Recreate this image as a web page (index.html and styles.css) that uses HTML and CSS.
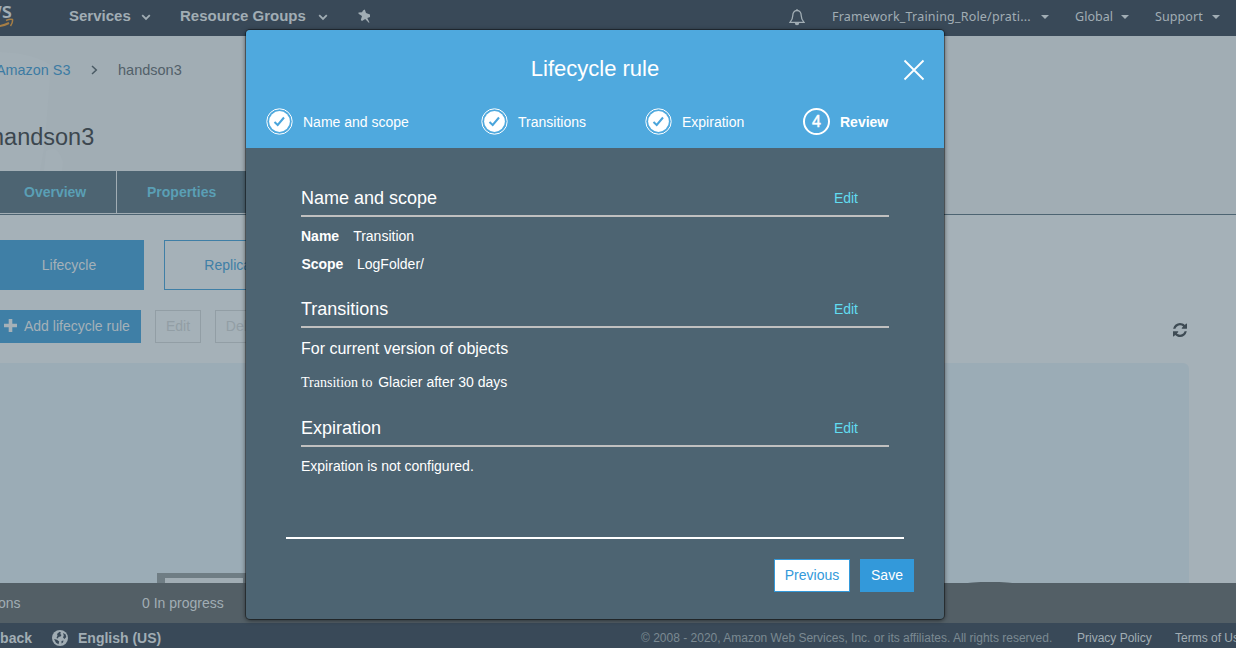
FILE: index.html
```html
<!DOCTYPE html>
<html lang="en">
<head>
<meta charset="utf-8">
<title>Lifecycle rule</title>
<link rel="stylesheet" href="styles.css">
</head>
<body>
<div class="page">
  <nav class="topnav">
    <div class="brand">
      <span class="brand-word">aws</span>
      <svg class="brand-smile" width="34" height="12" viewBox="0 0 34 12"><path d="M0 4.500Q15 12 29 5" fill="none" stroke="#a67e45" stroke-width="2"/><path d="M26 2.500Q30.500 .5 32.500 1.500Q33 4.500 30.500 8" fill="none" stroke="#a67e45" stroke-width="1.500"/></svg>
    </div>
    <span class="menu services">Services</span>
    <svg class="chev c1" width="10" height="7" viewBox="0 0 10 7"><path d="M1.200 1.200L5 5L8.800 1.200" /></svg>
    <span class="menu groups">Resource Groups</span>
    <svg class="chev c2" width="10" height="7" viewBox="0 0 10 7"><path d="M1.200 1.200L5 5L8.800 1.200" /></svg>
    <svg class="pin" width="13" height="15" viewBox="0 0 13 15"><path d="M5 1.500L6.800 .5L8 4L12 5.500L12 8L9.300 9L11.500 13.500L10.800 13.800L7.200 10L4 12L2.800 11L4 7L.5 4.800L.5 3.500L4 3.300Z" fill="#a1adb4"/></svg>
    <svg class="bell" width="16" height="18" viewBox="0 0 16 18"><path d="M8 1V2.500M8 2.500C5 2.500 3.800 5 3.800 7.500C3.800 11 2.700 12.500 1 14.400H15C13.300 12.500 12.200 11 12.200 7.500C12.200 5 11 2.500 8 2.500Z" fill="none" stroke="#a1adb4" stroke-width="1.300"/><path d="M5.800 15H10.200A2.200 2.200 0 0 1 5.800 15Z" fill="#a1adb4"/></svg>
    <span class="account role">Framework_Training_Role/prati...</span><i class="caret"></i>
    <span class="account region">Global</span><i class="caret"></i>
    <span class="account support">Support</span><i class="caret"></i>
  </nav>

  <header class="bucket">
    <svg class="watermark" width="66" height="135" viewBox="0 0 66 135"><path d="M0 16Q32 17 51 29L47 80Q46 105 40 135H0Z" fill="#a3afb6"/><path d="M46 115Q58 108 63 126L62 135H44Z" fill="#a3afb6"/></svg>
    <div class="crumbs">
      <span class="crumb-link">Amazon S3</span>
      <svg class="crumb-arrow" width="7" height="10" viewBox="0 0 7 10"><path d="M1 1L5.300 5L1 9" fill="none" stroke="#4a5a64" stroke-width="1.500"/></svg>
      <span class="crumb">handson3</span>
    </div>
    <h1 class="bucket-name">handson3</h1>
  </header>
  <div class="tabs"><span class="tab overview">Overview</span><span class="tab properties">Properties</span></div>

  <main class="content">
    <div class="switches"><button class="switch active">Lifecycle</button><button class="switch">Replication</button></div>
    <div class="actions">
      <button class="add"><svg width="13" height="13" viewBox="0 0 13 13"><path d="M6.500 0V13M0 6.500H13" stroke="#a5b1b8" stroke-width="3.600"/></svg><span>Add lifecycle rule</span></button>
      <button class="ghost">Edit</button>
      <button class="ghost delete">Delete</button>
      <svg class="refresh" width="14" height="14" viewBox="0 0 1536 1536"><path fill="#3e4b54" d="M1511 928q0 5-1 7-64 268-268 434.500T764 1536q-146 0-282.500-55T238 1324l-129 129q-19 19-45 19t-45-19-19-45V960q0-26 19-45t45-19h448q26 0 45 19t19 45-19 45l-137 137q71 66 161 102t187 36q134 0 250-65t186-179q11-17 53-117 8-23 30-23h192q13 0 22.500 9.500t9.500 22.500zM1536 128v448q0 26-19 45t-45 19h-448q-26 0-45-19t-19-45 19-45l138-138Q969 256 768 256q-134 0-250 65T332 500q-11 17-53 117-8 23-30 23H50q-13 0-22.500-9.500T18 608v-7q65-268 270-434.500T768 0q146 0 284 55.500T1297 212l130-129q19-19 45-19t45 19 19 45z"/></svg>
    </div>
    <div class="rules"><div class="thumb"></div></div>
  </main>

  <div class="operations"><span class="ops-label">Operations</span><span class="progress">0 In progress</span><i class="hump"></i></div>
  <footer class="footer">
    <span class="feedback">Feedback</span>
    <svg class="globe" width="16" height="16" viewBox="0 0 16 16"><circle cx="8" cy="8" r="8" fill="#a1adb4"/><path d="M7.500 1.800L9 2.500L8.200 4L9.500 5L8.500 6.500L6.500 7L6 8.500L4.500 8L5.500 5.500L5 4ZM11 3L13.500 4.200L14.300 7L12.500 9L11 7.500L11.800 5.500ZM2 9L5 9.800L7.200 11.500L6.500 14.200L4 12.800ZM9.500 11L11.500 10.500L11 12.500L9.500 13.500Z" fill="#394958"/></svg>
    <span class="language">English (US)</span>
    <span class="copyright">© 2008 - 2020, Amazon Web Services, Inc. or its affiliates. All rights reserved.</span>
    <span class="legal privacy">Privacy Policy</span>
    <span class="legal terms">Terms of Use</span>
  </footer>
</div>

<section class="modal" role="dialog">
  <div class="modal-head">
    <h2 class="modal-title">Lifecycle rule</h2>
    <svg class="close" width="22" height="22" viewBox="0 0 22 22"><path d="M1.500 1.500L20.500 20.500M20.500 1.500L1.500 20.500" stroke="#fff" stroke-width="1.800"/></svg>
    <div class="steps">
      <div class="step s1"><svg width="27" height="27" viewBox="0 0 27 27"><use href="#done"/></svg><span>Name and scope</span></div>
      <div class="step s2"><svg width="27" height="27" viewBox="0 0 27 27"><use href="#done"/></svg><span>Transitions</span></div>
      <div class="step s3"><svg width="27" height="27" viewBox="0 0 27 27"><use href="#done"/></svg><span>Expiration</span></div>
      <div class="step current"><b class="number">4</b><span>Review</span></div>
    </div>
    <svg class="defs" width="0" height="0"><defs><g id="done"><circle cx="13.500" cy="13.500" r="12.700" fill="none" stroke="#fff"/><circle cx="13.500" cy="13.500" r="10.400" fill="#fff"/><path d="M8.500 14L11.700 17L18 9.500" fill="none" stroke="#4aa5dc" stroke-width="2"/></g></defs></svg>
  </div>
  <div class="modal-body">
    <div class="section-head"><h3>Name and scope</h3><a>Edit</a></div>
    <p class="row name"><b>Name</b><span>Transition</span></p>
    <p class="row scope"><b>Scope</b><span>LogFolder/</span></p>
    <div class="section-head second"><h3>Transitions</h3><a>Edit</a></div>
    <p class="subhead">For current version of objects</p>
    <p class="transition"><span class="serif">Transition to</span><span>Glacier after 30 days</span></p>
    <div class="section-head third"><h3>Expiration</h3><a>Edit</a></div>
    <p class="row">Expiration is not configured.</p>
  </div>
  <div class="modal-foot"><button class="previous">Previous</button><button class="save">Save</button></div>
</section>
</body>
</html>
```

FILE: styles.css
```css
* { box-sizing: border-box; }
body { margin: 0; width: 1236px; height: 648px; overflow: hidden; position: relative; font-family: "Liberation Sans", Arial, sans-serif; font-size: 14px; background: #a5b1b8; }
h1, h2, h3, p { margin: 0; font-weight: 400; }
svg { display: block; flex: none; }
button { font: inherit; border: 0; border-radius: 0; padding: 0; margin: 0; flex: none; }
span { white-space: nowrap; flex: none; }
.page { height: 648px; display: flex; flex-direction: column; overflow: hidden; }

.topnav { height: 36px; flex: none; background: #394958; color: #a1adb4; display: flex; align-items: center; padding-bottom: 4px; }
.brand { width: 69px; height: 32px; flex: none; display: flex; flex-direction: column; margin-left: -20px; margin-right: 20px; }
.brand-word { font: 600 21px/24px "Open Sans", sans-serif; width: 32px; display: flex; justify-content: flex-end; margin-top: -2px; }
.brand-smile { margin-top: -4px; }
.menu { font-size: 15px; font-weight: 700; padding-bottom: 2px; }
.services { width: 72px; }
.groups { width: 138px; }
.chev { fill: none; stroke: #a1adb4; stroke-width: 1.8; margin-top: 2px; }
.c1 { margin-right: 29px; }
.c2 { margin-right: 30px; }
.pin { margin-right: 418px; }
.bell { margin-right: 27px; margin-top: 2px; }
.account { font: 12.5px/18px "Noto Sans", sans-serif; padding-top: 1px; }
.role { width: 209px; letter-spacing: .19px; }
.region { width: 46px; letter-spacing: .05px; }
.support { width: 57px; letter-spacing: .1px; }
.caret { flex: none; border: 3.5px solid transparent; border-top: 4px solid #a1adb4; border-bottom: 0; width: 8px; border-left-width: 4px; border-right-width: 4px; margin-right: 26px; margin-top: 1px; }

.bucket { height: 135px; flex: none; background: #a1adb4; position: relative; color: #4a5a64; }
.watermark { position: absolute; left: 0; top: 0; }
.crumbs { position: relative; display: flex; align-items: center; padding-top: 25px; height: 43px; color: #526069; font-size: 14.5px; }
.crumb-link { color: #3c7ba3; width: 95px; margin-left: -4px; font-size: 14.4px; }
.crumb-arrow { margin-right: 20px; }
.bucket-name { position: relative; font-size: 23.5px; line-height: 28px; color: #3c474f; margin: 44px 0 0 -9px; }
.tabs { height: 44px; flex: none; display: flex; border-bottom: 1px solid #4d6472; padding-bottom: 1px; background: #a1adb4; }
.tab { background: #4d6472; color: #5a9fb5; font-weight: 700; line-height: 42px; }
.overview { width: 117px; padding-left: 24px; border-right: 1px solid #a1adb4; }
.properties { width: 160px; padding-left: 30px; }

.content { height: 368px; flex: none; background: #a5b1b8; padding-top: 25px; display: flex; flex-direction: column; }
.switches { display: flex; height: 50px; flex: none; gap: 20px; }
.switch { width: 150px; height: 50px; border: 1px solid #3f7fa6; background: transparent; color: #3f7fa6; }
.switch.active { background: #3f7fa6; color: #a5b1b8; margin-left: -6px; }
.actions { display: flex; height: 33px; margin-top: 20px; flex: none; }
.add { width: 141px; height: 33px; background: #3f7fa6; color: #a5b1b8; display: flex; align-items: center; gap: 7px; padding: 0 0 2px 4px; margin-right: 14px; }
.ghost { width: 46px; height: 33px; border: 1px solid #929ea5; background: transparent; color: #929ea5; margin-right: 14px; padding-bottom: 2px; }
.delete { width: 62px; }
.refresh { margin: 13px 0 0 882px; }
.rules { width: 1189px; height: 220px; flex: none; margin-top: 20px; background: #9bacb6; border-radius: 0 6px 0 0; display: flex; align-items: flex-end; }
.thumb { width: 94px; height: 10px; margin-left: 157px; border: solid #6f7d84; border-width: 5px 8px 0; background: #a1adb4; }

.operations { height: 40px; flex: none; background: #535f66; color: #a1adb4; display: flex; align-items: center; position: relative; }
.ops-label { width: 67px; margin-left: -48px; }
.progress { margin-left: 123px; }
.hump { position: absolute; left: 966px; top: -1px; width: 48px; height: 3px; border-radius: 50%; background: #535f66; }
.footer { height: 25px; flex: none; background: #394958; color: #a1adb4; display: flex; align-items: center; padding-top: 4px; overflow: hidden; }
.feedback { font-weight: 700; width: 66px; margin-left: -34px; text-align: right; }
.globe { margin: 0 10px 0 20px; }
.language { font-weight: 700; width: 563px; }
.copyright { width: 436px; color: #7b8992; font-size: 12px; }
.legal { font-size: 12px; }
.privacy { width: 98px; }

.modal { position: absolute; left: 246px; top: 30px; width: 698px; height: 589px; background: #4d6472; color: #fff; border-radius: 4px; box-shadow: 0 0 0 1px rgba(0,0,0,.35), 0 1px 5px rgba(0,0,0,.65); overflow: hidden; }
.modal-head { height: 118px; background: #4fa9de; position: relative; padding-top: 25px; }
.modal-title { font-size: 22px; line-height: 28px; text-align: center; }
.close { position: absolute; left: 657px; top: 29px; }
.steps { display: flex; padding: 25px 0 0 20px; }
.step { display: flex; align-items: center; gap: 10px; flex: none; height: 27px; }
.step span { padding-top: 1px; }
.s1 { width: 215px; }
.s2 { width: 164px; }
.s3 { width: 158px; }
.current { font-weight: 700; }
.number { width: 27px; height: 27px; border: 2px solid #fff; border-radius: 50%; text-align: center; font-size: 16px; line-height: 24px; font-weight: 400; -webkit-text-stroke: .5px #fff; }
.defs { position: absolute; }
.modal-body { height: 389px; margin: 0 55px; padding-top: 36px; }
.section-head { height: 33px; border-bottom: 2px solid #c0c0c0; display: flex; justify-content: space-between; padding-right: 31px; line-height: 28px; }
.section-head h3 { font-size: 18px; }
.section-head a { color: #62dcf0; }
.row { height: 28px; margin-top: 9px; line-height: 20px; display: flex; }
.name span { margin-left: 14px; }
.scope { margin-top: 0; padding-left: .4px; }
.scope span { margin-left: 13.6px; }
.second { margin-top: 13px; }
.subhead { font-size: 16px; line-height: 22px; margin-top: 10px; }
.transition { line-height: 20px; margin-top: 12px; display: flex; }
.serif { font-family: "Liberation Serif", "Times New Roman", serif; width: 77.2px; padding-top: 1px; margin-bottom: -1px; }
.third { margin-top: 22px; }
.modal-foot { margin: 0 40px; border-top: 2px solid #fff; padding: 20px 0 0; width: 618px; display: flex; justify-content: flex-end; gap: 10px; }
.previous, .save { height: 33px; padding-bottom: 2px; }
.previous { width: 76px; border: 1px solid #3399da; background: #fff; color: #3399da; }
.save { width: 54px; background: #3399da; color: #fff; margin-right: -10px; }
```
